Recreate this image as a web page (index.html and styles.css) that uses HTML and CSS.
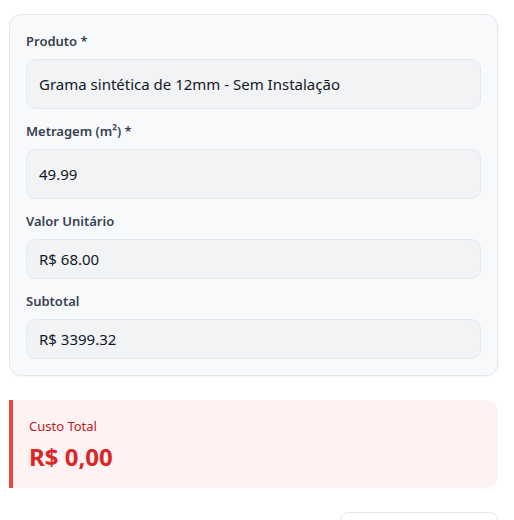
FILE: index.html
```html
<!DOCTYPE html>
<html lang="pt-BR">
<head>
<meta charset="utf-8">
<link rel="stylesheet" href="styles.css">
</head>
<body>
<div class="page">
  <div class="card">
    <div class="field">
      <label class="label">Produto *</label>
      <div class="input">Grama sintética de 12mm - Sem Instalação</div>
    </div>
    <div class="field">
      <label class="label">Metragem (m²) *</label>
      <div class="input">49.99</div>
    </div>
    <div class="field">
      <label class="label">Valor Unitário</label>
      <div class="input readonly">R$ 68.00</div>
    </div>
    <div class="field">
      <label class="label">Subtotal</label>
      <div class="input readonly">R$ 3399.32</div>
    </div>
  </div>
  <div class="total">
    <div class="total-label">Custo Total</div>
    <div class="total-value">R$ 0,00</div>
  </div>
  <div class="actions">
    <button class="btn" aria-label="Adicionar"></button>
  </div>
</div>
</body>
</html>
```
FILE: styles.css
```css
* { box-sizing: border-box; }
html, body { margin: 0; padding: 0; background: #ffffff; }
body { font-family: "Noto Sans", "Open Sans", sans-serif; color: #111827; }
.page { padding: 14px 16px 0 9px; }
.card {
  background: #f8f9fb;
  border: 1px solid #e2e8f0;
  border-radius: 12px;
  padding: 16px;
  box-shadow: 0 1px 2px rgba(0,0,0,0.04);
}
.field { display: flex; flex-direction: column; margin-bottom: 12px; }
.field:last-child { margin-bottom: 0; }
.label {
  font-size: 13px;
  font-weight: 600;
  line-height: 20px;
  color: #374151;
  margin-bottom: 8px;
}
.input {
  background: #f2f3f5;
  border: 1px solid #e2e8f0;
  border-radius: 10px;
  padding: 12px 12px;
  font-size: 15px;
  line-height: 24px;
  color: #111827;
}
.input.readonly { padding: 8px 12px; line-height: 22px; }
.total {
  margin-top: 24px;
  background: #fef2f2;
  border-left: 4px solid #ef4444;
  border-radius: 0 12px 12px 0;
  padding: 16px;
  height: 88px;
}
.total-label { font-size: 13px; color: #b91c1c; line-height: 20px; margin-bottom: 6px; }
.total-value { font-size: 24px; font-weight: 700; color: #dc2626; line-height: 30px; }
.actions { display: flex; justify-content: flex-end; margin-top: 24px; }
.btn {
  width: 158px;
  height: 40px;
  background: #ffffff;
  border: 1px solid #e2e8f0;
  border-radius: 8px;
}
```
